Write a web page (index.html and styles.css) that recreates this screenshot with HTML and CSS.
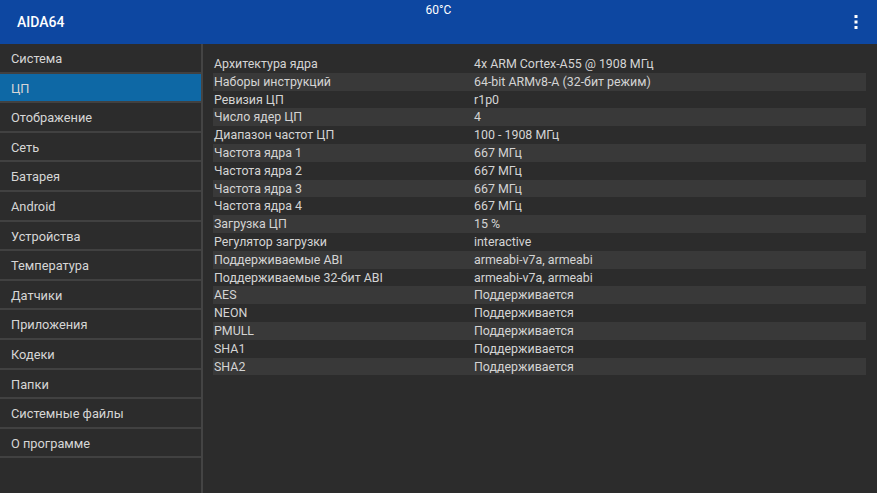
FILE: index.html
```html
<!DOCTYPE html>
<html lang="ru">
<head>
    <meta charset="UTF-8">
    <title>AIDA64</title>
    <link rel="stylesheet" href="styles.css">
</head>
<body>
    <header class="topbar">
        <h1 class="title">AIDA64</h1>
        <span class="temp">60°C</span>
        <svg class="menu" width="4" height="14" viewBox="0 0 4 14">
            <rect x="0.5" y="0" width="3" height="3" fill="#fff"/>
            <rect x="0.5" y="5.5" width="3" height="3" fill="#fff"/>
            <rect x="0.5" y="11" width="3" height="3" fill="#fff"/>
        </svg>
    </header>
    <main class="layout">
        <nav class="sidebar">
            <div class="nav-item">Система</div>
            <div class="nav-item active">ЦП</div>
            <div class="nav-item">Отображение</div>
            <div class="nav-item">Сеть</div>
            <div class="nav-item">Батарея</div>
            <div class="nav-item">Android</div>
            <div class="nav-item">Устройства</div>
            <div class="nav-item">Температура</div>
            <div class="nav-item">Датчики</div>
            <div class="nav-item">Приложения</div>
            <div class="nav-item">Кодеки</div>
            <div class="nav-item">Папки</div>
            <div class="nav-item">Системные файлы</div>
            <div class="nav-item">О программе</div>
        </nav>
        <section class="details">
            <div class="row"><span class="key">Архитектура ядра</span><span class="val">4x ARM Cortex-A55 @ 1908 МГц</span></div>
            <div class="row"><span class="key">Наборы инструкций</span><span class="val">64-bit ARMv8-A (32-бит режим)</span></div>
            <div class="row"><span class="key">Ревизия ЦП</span><span class="val">r1p0</span></div>
            <div class="row"><span class="key">Число ядер ЦП</span><span class="val">4</span></div>
            <div class="row"><span class="key">Диапазон частот ЦП</span><span class="val">100 - 1908 МГц</span></div>
            <div class="row"><span class="key">Частота ядра 1</span><span class="val">667 МГц</span></div>
            <div class="row"><span class="key">Частота ядра 2</span><span class="val">667 МГц</span></div>
            <div class="row"><span class="key">Частота ядра 3</span><span class="val">667 МГц</span></div>
            <div class="row"><span class="key">Частота ядра 4</span><span class="val">667 МГц</span></div>
            <div class="row"><span class="key">Загрузка ЦП</span><span class="val">15 %</span></div>
            <div class="row"><span class="key">Регулятор загрузки</span><span class="val">interactive</span></div>
            <div class="row"><span class="key">Поддерживаемые ABI</span><span class="val">armeabi-v7a, armeabi</span></div>
            <div class="row"><span class="key">Поддерживаемые 32-бит ABI</span><span class="val">armeabi-v7a, armeabi</span></div>
            <div class="row"><span class="key">AES</span><span class="val">Поддерживается</span></div>
            <div class="row"><span class="key">NEON</span><span class="val">Поддерживается</span></div>
            <div class="row"><span class="key">PMULL</span><span class="val">Поддерживается</span></div>
            <div class="row"><span class="key">SHA1</span><span class="val">Поддерживается</span></div>
            <div class="row"><span class="key">SHA2</span><span class="val">Поддерживается</span></div>
        </section>
    </main>
</body>
</html>
```

FILE: styles.css
```css
body {
    margin: 0;
    font-family: Roboto, "Noto Sans", sans-serif;
    background-color: #2c2c2c;
    color: #dcdcdc;
    width: 877px;
    height: 493px;
    overflow: hidden;
}
.topbar {
    height: 44px;
    background-color: #0d47a1;
    display: flex;
    align-items: center;
    position: relative;
    padding: 0 19px 0 17px;
    justify-content: space-between;
}
.title {
    margin: 0;
    font-size: 14px;
    font-weight: 500;
    color: #fff;
}
.temp {
    position: absolute;
    left: 0;
    right: 0;
    top: 3px;
    text-align: center;
    font-size: 12px;
    color: #fff;
}
.menu {
    display: block;
}
.layout {
    display: flex;
    height: 449px;
}
.sidebar {
    width: 201px;
    border-right: 2px solid #444;
    flex-shrink: 0;
}
.nav-item {
    height: 27.6px;
    line-height: 29px;
    padding-left: 11px;
    font-size: 12.8px;
    color: #d6d6d6;
    border-bottom: 2px solid #414141;
}
.nav-item.active {
    background-color: #0e68a5;
}
.details {
    flex: 1;
    padding: 11px 11px 0 10px;
}
.row {
    display: flex;
    height: 17.8px;
    line-height: 18px;
    font-size: 12.4px;
    color: #d4d4d4;
}
.row:nth-child(even) {
    background-color: #393939;
}
.key {
    width: 260px;
    padding-left: 1px;
}
```
